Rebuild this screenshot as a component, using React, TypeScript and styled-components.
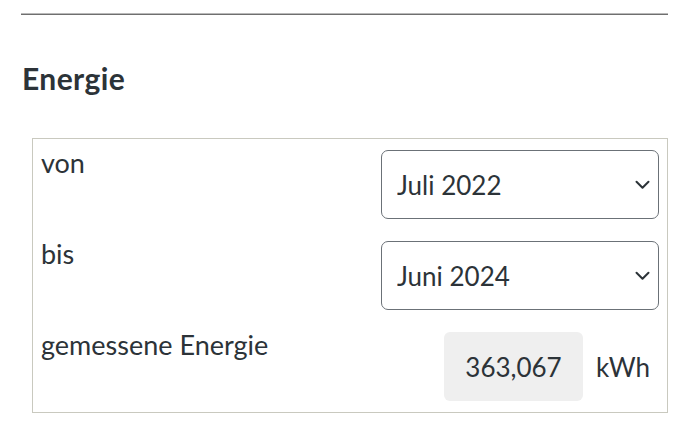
import styled, { createGlobalStyle } from "styled-components";

const GlobalStyle = createGlobalStyle`
  html, body {
    margin: 0;
    padding: 0;
    background: #ffffff;
  }
  body {
    font-family: Lato, "Noto Sans", sans-serif;
    color: #2c3338;
  }
`;

const ChevronDown = () => (
  <svg width="15" height="10" viewBox="0 0 15 10" fill="none">
    <path
      d="M1.5 1.8 L7.5 7.8 L13.5 1.8"
      stroke="#2c3338"
      strokeWidth="2"
      strokeLinecap="round"
      strokeLinejoin="round"
    />
  </svg>
);

type SelectProps = { value: string; options: string[] };

const MonthSelect = ({ value, options }: SelectProps) => (
  <SelectWrap>
    <Select defaultValue={value}>
      {options.map((o) => (
        <option key={o}>{o}</option>
      ))}
    </Select>
    <Chevron>
      <ChevronDown />
    </Chevron>
  </SelectWrap>
);

const months = ["Juli 2022", "Juni 2024"];

export default function App() {
  return (
    <>
      <GlobalStyle />
      <Page>
        <Rule />
        <Heading>Energie</Heading>
        <Table>
          <Label>von</Label>
          <Value>
            <MonthSelect value="Juli 2022" options={months} />
          </Value>
          <Label>bis</Label>
          <Value>
            <MonthSelect value="Juni 2024" options={months} />
          </Value>
          <Label>gemessene Energie</Label>
          <Value>
            <Output>363,067</Output>
            <Unit>kWh</Unit>
          </Value>
        </Table>
      </Page>
    </>
  );
}

const Page = styled.div`
  padding: 13px 22px 0 21px;
`;

const Rule = styled.div`
  height: 1px;
  border-top: 1px solid #b9b9b9;
  background: #6f6f6f;
`;

const Heading = styled.h2`
  margin: 45px 0 0 1px;
  font-size: 30px;
  line-height: 36px;
  font-weight: 700;
  letter-spacing: 0.4px;
  color: #2c3338;
`;

const Table = styled.div`
  display: grid;
  grid-template-columns: 1fr auto;
  margin: 42px 0 0 11px;
  border: 1px solid #c9c9bf;
`;

const Label = styled.div`
  padding: 8px 8px 0 8px;
  font-size: 27px;
  line-height: 32px;
`;

const Value = styled.div`
  display: flex;
  align-items: center;
  justify-content: flex-end;
  padding: 11px 8px;
`;

const SelectWrap = styled.div`
  position: relative;
  width: 278px;
  height: 69px;
`;

const Select = styled.select`
  appearance: none;
  width: 100%;
  height: 100%;
  box-sizing: border-box;
  border: 1px solid #6b7177;
  border-radius: 7px;
  background: #ffffff;
  padding: 0 40px 0 15px;
  font-family: inherit;
  font-size: 26px;
  color: #2c3338;
`;

const Chevron = styled.span`
  position: absolute;
  right: 9px;
  top: 50%;
  transform: translateY(-50%);
  display: flex;
  pointer-events: none;
`;

const Output = styled.div`
  display: flex;
  align-items: center;
  justify-content: center;
  width: 139px;
  height: 69px;
  border-radius: 6px;
  background: #efefef;
  font-size: 26px;
`;

const Unit = styled.span`
  margin: 0 9px 0 13px;
  font-size: 26px;
`;
